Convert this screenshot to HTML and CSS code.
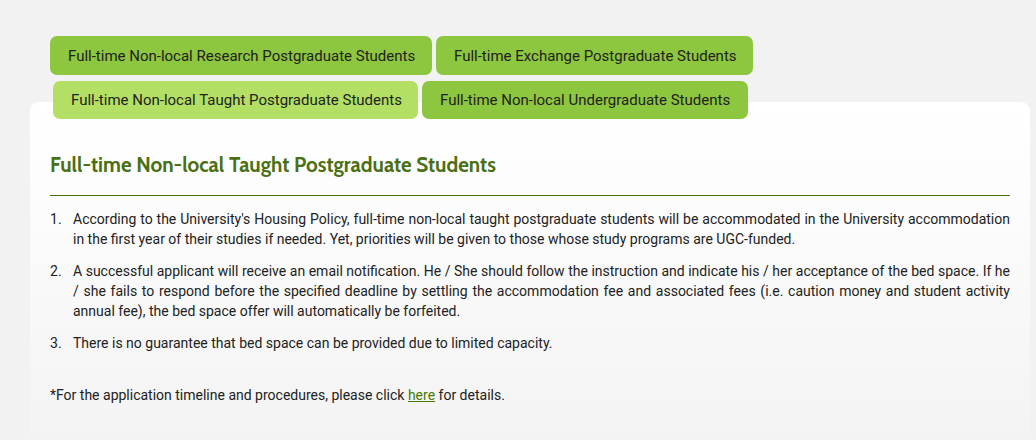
FILE: index.html
```html
<!DOCTYPE html>
<html lang="en">
<head>
<meta charset="utf-8">
<title>Non-local Students</title>
<link rel="stylesheet" href="styles.css">
</head>
<body>
<div class="page">
  <div class="tabs">
    <div class="tab-row">
      <a class="tab tab-research" href="#">Full-time Non-local Research Postgraduate Students</a>
      <a class="tab tab-exchange" href="#">Full-time Exchange Postgraduate Students</a>
    </div>
    <div class="tab-row tab-row-2">
      <a class="tab tab-active tab-taught" href="#">Full-time Non-local Taught Postgraduate Students</a>
      <a class="tab tab-ug" href="#">Full-time Non-local Undergraduate Students</a>
    </div>
  </div>
  <div class="panel">
    <h2 class="panel-title">Full-time Non-local Taught Postgraduate Students</h2>
    <hr class="rule">
    <ol class="items">
      <li>According to the University's Housing Policy, full-time non-local taught postgraduate students will be accommodated in the University accommodation in the first year of their studies if needed. Yet, priorities will be given to those whose study programs are UGC-funded.</li>
      <li>A successful applicant will receive an email notification. He / She should follow the instruction and indicate his / her acceptance of the bed space. If he / she fails to respond before the specified deadline by settling the accommodation fee and associated fees (i.e. caution money and student activity annual fee), the bed space offer will automatically be forfeited.</li>
      <li>There is no guarantee that bed space can be provided due to limited capacity.</li>
    </ol>
    <p class="note">*For the application timeline and procedures, please click <a class="link" href="#">here</a> for details.</p>
  </div>
</div>
</body>
</html>
```

FILE: styles.css
```css
* { box-sizing: border-box; }
html, body { margin: 0; padding: 0; }
body {
  background: #f2f2f2;
  font-family: Roboto, "Liberation Sans", Arial, sans-serif;
  font-size: 14px;
  color: #222;
  height: 440px;
  overflow: hidden;
}
.page {
  padding: 36px 6px 0 30px;
}
.tabs {
  position: relative;
  z-index: 2;
  padding-left: 20px;
  margin-bottom: -17px;
}
.tab-row {
  display: flex;
  gap: 4px;
}
.tab-row-2 {
  margin-top: 6px;
  padding-left: 3px;
}
.tab {
  display: block;
  background: #8dc63f;
  color: #222;
  text-decoration: none;
  border-radius: 7px;
  height: 39px;
  line-height: 40px;
  padding: 0 18px;
  font-size: 15px;
  white-space: nowrap;
}
.tab-row-2 .tab { height: 38px; line-height: 39px; }
.tab-active { background: #b3e064; }
.tab-research { width: 382px; }
.tab-exchange { width: 317px; }
.tab-taught { width: 365px; }
.tab-ug { width: 326px; }
.panel {
  position: relative;
  z-index: 1;
  background: linear-gradient(to bottom, #ffffff 0px, #fdfdfd 80px, #f3f3f3 340px);
  border-radius: 9px 9px 0 0;
  padding: 48px 20px 40px 20px;
  min-height: 360px;
}
.panel-title {
  margin: 0;
  font-family: "Cabin", Lato, "Open Sans", sans-serif;
  font-weight: 700;
  font-size: 20.6px;
  line-height: 30px;
  color: #4b6f13;
}
.rule {
  border: 0;
  border-top: 1px solid #4b7012;
  margin: 15px 0 13px 0;
  height: 0;
}
.items {
  list-style: none;
  margin: 0;
  padding: 0;
  counter-reset: item;
}
.items li {
  counter-increment: item;
  display: flex;
  line-height: 20px;
  text-align: justify;
  margin-bottom: 12px;
}
.items li::before {
  content: counter(item) ".";
  flex: 0 0 23px;
}
.note {
  margin: 32px 0 0 0;
  line-height: 20px;
}
.link {
  color: #4b7a00;
  text-decoration: underline;
}
```
